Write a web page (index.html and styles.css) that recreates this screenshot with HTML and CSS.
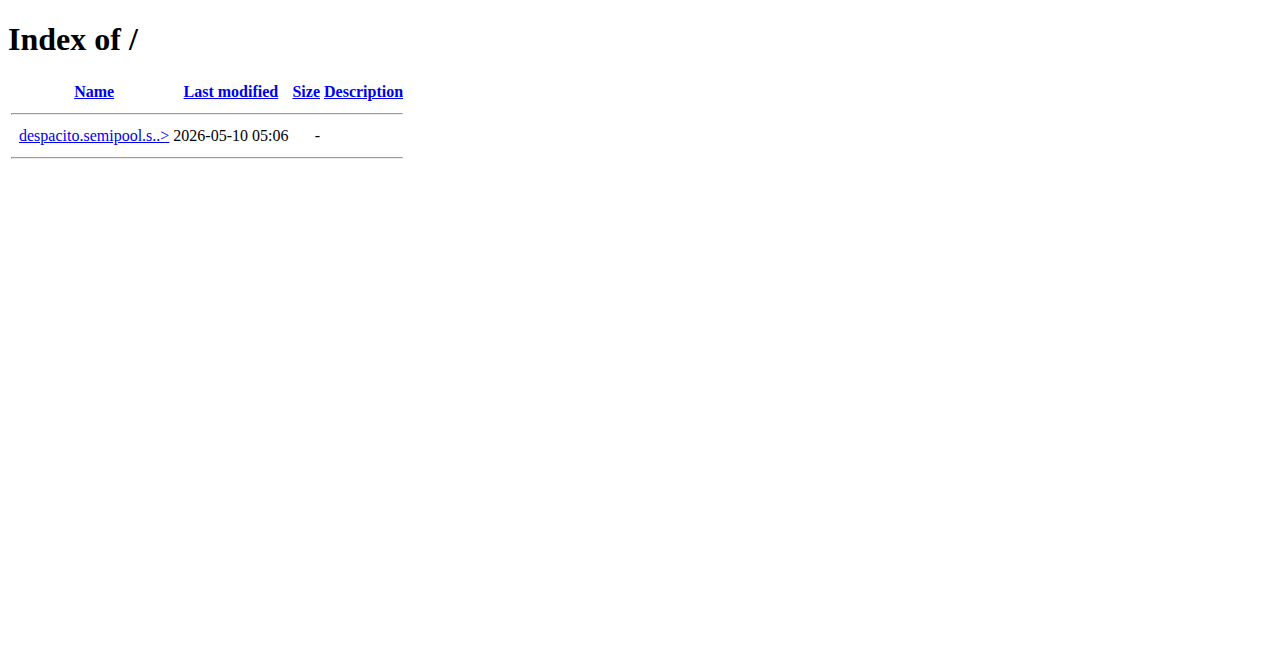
FILE: index.html
```html
<!DOCTYPE HTML PUBLIC "-//W3C//DTD HTML 3.2 Final//EN">
<html>
<head>
<title>Index of /</title>
<link rel="stylesheet" href="styles.css">
</head>
<body class="page">
<h1 class="title">Index of /</h1>
<table class="listing">
<tr><th class="top"><span class="ico"></span></th><th><a href="#">Name</a></th><th><a href="#">Last modified</a></th><th><a href="#">Size</a></th><th><a href="#">Description</a></th></tr>
<tr><th colspan="5"><hr class="rule"></th></tr>
<tr><td class="top"><span class="ico"></span></td><td><a href="#">despacito.semipool.s..&gt;</a></td><td class="right">2026-05-10 05:06  </td><td class="right">  - </td><td>&nbsp;</td></tr>
<tr><th colspan="5"><hr class="rule"></th></tr>
</table>
</body>
</html>
```
FILE: styles.css
```css
.page {
  margin: 8px;
  background: #ffffff;
  color: #000000;
  font-family: "Liberation Serif", "Times New Roman", serif;
  font-size: 16px;
}
.title {
  font-size: 2em;
  margin: 13.44px 0 0.67em;
  font-weight: bold;
}
.listing {
  border-spacing: 2px;
}
.listing a {
  color: #0000ee;
}
.top {
  vertical-align: top;
}
.right {
  text-align: right;
}
.ico {
  display: inline-block;
  width: 4px;
  height: 16px;
  vertical-align: bottom;
}
.rule {
  margin: 8px 0;
}
```
